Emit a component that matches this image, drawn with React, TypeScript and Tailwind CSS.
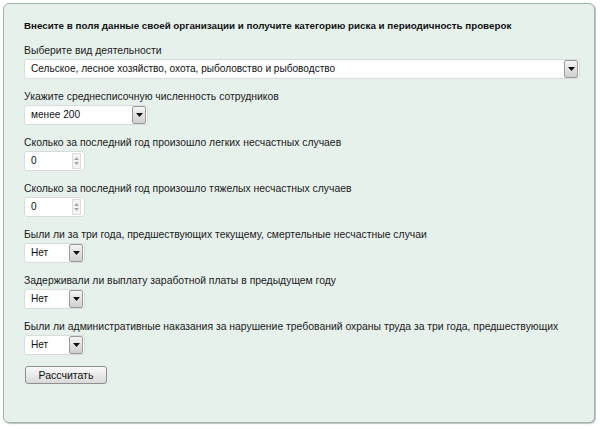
import React from "react";

const Arrow = ({ className = "" }: { className?: string }) => (
  <div
    className={`flex h-[18px] w-[14px] items-center justify-center rounded-[2px] border border-[#9a9a9a] bg-gradient-to-b from-[#f4f4f4] to-[#cfcfcf] ${className}`}
  >
    <svg width="7" height="4" viewBox="0 0 7 4">
      <path d="M0 0 L7 0 L3.5 4 Z" fill="#111" />
    </svg>
  </div>
);

const Select = ({ value, width }: { value: string; width: string }) => (
  <div
    className={`flex h-[20px] items-center justify-between rounded-[3px] border border-[#d8dcda] bg-white pl-[6px] pr-[1px] ${width}`}
  >
    <span className="text-[10.1px] leading-none text-[#111]">{value}</span>
    <Arrow />
  </div>
);

const NumberInput = ({ value }: { value: string }) => (
  <div className="flex h-[20px] w-[61px] items-center justify-between rounded-[3px] border border-[#d8dcda] bg-white pl-[6px] pr-[3px]">
    <span className="text-[10.1px] leading-none text-[#111]">{value}</span>
    <div className="flex h-[16px] w-[9px] flex-col items-center justify-center gap-[2px] border border-[#dcdcdc] bg-[#f3f3f3]">
      <svg width="5" height="3" viewBox="0 0 5 3">
        <path d="M0 3 L5 3 L2.5 0 Z" fill="#a8a8a8" />
      </svg>
      <svg width="5" height="3" viewBox="0 0 5 3">
        <path d="M0 0 L5 0 L2.5 3 Z" fill="#a8a8a8" />
      </svg>
    </div>
  </div>
);

const fields: { label: string; control: React.ReactNode }[] = [
  {
    label: "Выберите вид деятельности",
    control: (
      <Select
        value="Сельское, лесное хозяйство, охота, рыболовство и рыбоводство"
        width="w-[556px]"
      />
    ),
  },
  {
    label: "Укажите среднесписочную численность сотрудников",
    control: <Select value="менее 200" width="w-[124px]" />,
  },
  {
    label: "Сколько за последний год произошло легких несчастных случаев",
    control: <NumberInput value="0" />,
  },
  {
    label: "Сколько за последний год произошло тяжелых несчастных случаев",
    control: <NumberInput value="0" />,
  },
  {
    label:
      "Были ли за три года, предшествующих текущему, смертельные несчастные случаи",
    control: <Select value="Нет" width="w-[61px]" />,
  },
  {
    label: "Задерживали ли выплату заработной платы в предыдущем году",
    control: <Select value="Нет" width="w-[61px]" />,
  },
  {
    label:
      "Были ли административные наказания за нарушение требований охраны труда за три года, предшествующих",
    control: <Select value="Нет" width="w-[61px]" />,
  },
];

export default function App() {
  return (
    <div className="h-[429px] w-[600px] bg-white p-[3px] font-['Liberation_Sans',Arial,sans-serif]">
      <div className="h-[420px] w-[592px] rounded-[6px] border border-[#9cb5a6] bg-[#e7f1ec] pl-[20px] pt-[15px] shadow-[1px_1px_1px_rgba(0,0,0,0.25)]">
        <h1 className="whitespace-nowrap text-[9.8px] font-bold leading-[14px] text-[#111]">
          Внесите в поля данные своей организации и получите категорию риска и
          периодичность проверок
        </h1>
        <div className="mt-[11px] flex flex-col gap-[11px]">
          {fields.map((f, i) => (
            <div key={i} className="flex flex-col">
              <label className="mb-[1px] whitespace-nowrap text-[10.4px] leading-[14px] text-[#1a1a1a]">
                {f.label}
              </label>
              {f.control}
            </div>
          ))}
        </div>
        <button className="mt-[11px] ml-[1px] h-[18px] w-[82px] rounded-[3px] border border-[#8f8f8f] bg-gradient-to-b from-[#fafafa] to-[#d9d9d9] text-[10.5px] leading-none text-[#111]">
          Рассчитать
        </button>
      </div>
    </div>
  );
}
